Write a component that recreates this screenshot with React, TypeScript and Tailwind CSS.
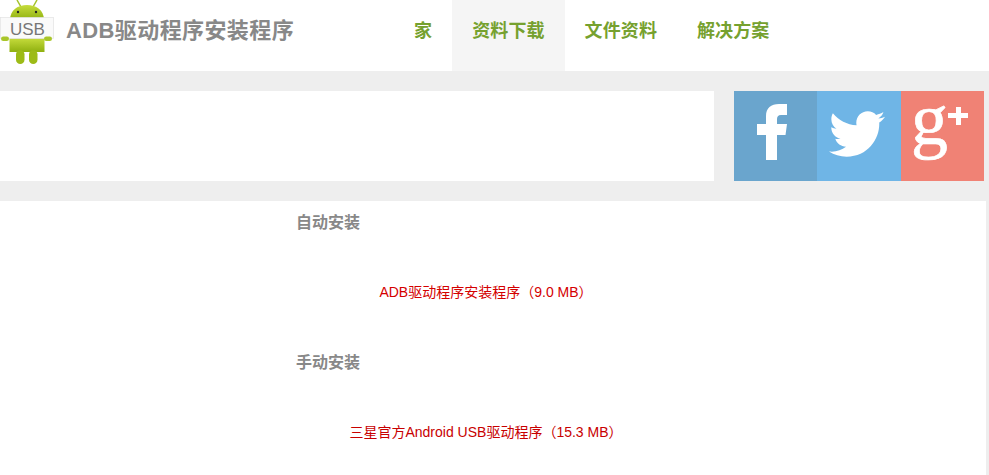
import { FaTwitter } from 'react-icons/fa';

const FONT = "font-['Liberation_Sans','Noto_Sans_CJK_SC',sans-serif]";

const navItems = ['家', '资料下载', '文件资料', '解决方案'];

function UsbDroid() {
  return (
    <svg width="54" height="64" viewBox="0 0 54 64" className="shrink-0">
      <defs>
        <linearGradient id="droid" x1="0" y1="0" x2="0" y2="1">
          <stop offset="0" stopColor="#c6dc3c" />
          <stop offset="1" stopColor="#8fb010" />
        </linearGradient>
      </defs>
      <path d="M17 0l4 7M37 0l-4 7" stroke="#a4c22a" strokeWidth="1.5" />
      <path d="M10 20C10 10 18 5 27 5s17 5 17 15z" fill="url(#droid)" />
      <circle cx="18" cy="12" r="1.2" fill="#222" />
      <circle cx="36" cy="12" r="1.2" fill="#222" />
      <rect x="9.5" y="38" width="35" height="14" fill="url(#droid)" />
      <rect x="16" y="50" width="8.5" height="14" rx="4.25" fill="#9dbb17" />
      <rect x="29" y="50" width="8.5" height="14" rx="4.25" fill="#9dbb17" />
      <rect x="0.5" y="17.5" width="53" height="21" fill="#fafafa" stroke="#e4e4e4" strokeWidth="0.75" />
      <rect x="1" y="36.5" width="8" height="4.5" rx="2.25" fill="#a9c62a" />
      <rect x="44" y="36.5" width="8" height="4.5" rx="2.25" fill="#a9c62a" />
    </svg>
  );
}

export default function App() {
  return (
    <div className={`h-[475px] w-[989px] overflow-hidden bg-[#eeeeee] ${FONT}`}>
      <header className="flex h-[71px] items-stretch bg-white">
        <div className="relative w-[66px] shrink-0">
          <UsbDroid />
          <span className="absolute left-[10px] top-[20px] text-[17px] leading-[20px] text-[#777777]">USB</span>
        </div>
        <h1 className="mt-[15px] h-fit text-[22px] font-bold leading-[32px] tracking-[0.4px] text-[#888888]">
          ADB驱动程序安装程序
        </h1>
        <nav className="ml-[100px] flex">
          {navItems.map((item, i) => (
            <a
              key={item}
              className={`px-5 pt-[17px] text-[18px] font-bold leading-[28px] tracking-[0.1px] text-[#76a12f] ${i === 1 ? 'bg-[#f5f5f5]' : ''}`}
            >
              {item}
            </a>
          ))}
        </nav>
      </header>

      <div className="mt-5 flex h-[90px]">
        <div className="w-[714px] bg-white" />
        <div className="ml-5 flex w-[250px]">
          <a className="w-[83px] bg-[#6aa5cd] text-white">
            <svg width="83" height="90" viewBox="0 0 83 90" fill="currentColor">
              <path d="M32 69V44H23V33H32V25C32 17 37 13 45 13H53V24H47C44 24 43 26 43 28V33H53L51.5 44H43V69Z" />
            </svg>
          </a>
          <a className="flex w-[84px] items-center justify-center bg-[#6fb5e6] pb-[5px] pr-[4px] text-white">
            <FaTwitter size={56} />
          </a>
          <a className="relative w-[83px] bg-[#f08275] text-white">
            <span className="absolute left-[10px] top-0 font-['Liberation_Serif',serif] text-[74px] leading-[56px] [-webkit-text-stroke:0.7px_white]">g</span>
            <span className="absolute left-[47px] top-[22px] h-[5px] w-[20px] bg-white" />
            <span className="absolute left-[55px] top-[16px] h-[18px] w-[5px] bg-white" />
          </a>
        </div>
      </div>

      <main className="mt-5 h-[274px] w-[986px] bg-white">
        <h2 className="pl-[296px] pt-[10px] text-[16px] font-bold leading-6 text-[#888888]">自动安装</h2>
        <p className="mt-[47px] w-[972px] text-center text-[14px] leading-5 text-[#d40000]">
          ADB驱动程序安装程序（9.0 MB）
        </p>
        <h2 className="mt-[49px] pl-[296px] text-[16px] font-bold leading-6 text-[#888888]">手动安装</h2>
        <p className="mt-[47px] w-[972px] text-center text-[14px] leading-5 text-[#c80000]">
          三星官方Android USB驱动程序（15.3 MB）
        </p>
      </main>
    </div>
  );
}
